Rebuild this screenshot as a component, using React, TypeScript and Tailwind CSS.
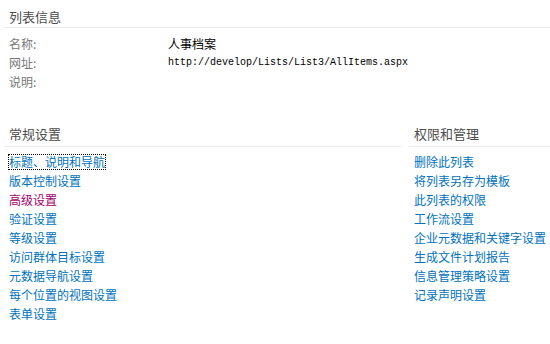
import React from "react";

const font = { fontFamily: '"Noto Sans CJK SC", "Noto Sans", sans-serif' };

const leftLinks = [
  "标题、说明和导航",
  "版本控制设置",
  "高级设置",
  "验证设置",
  "等级设置",
  "访问群体目标设置",
  "元数据导航设置",
  "每个位置的视图设置",
  "表单设置",
];

const rightLinks = [
  "删除此列表",
  "将列表另存为模板",
  "此列表的权限",
  "工作流设置",
  "企业元数据和关键字设置",
  "生成文件计划报告",
  "信息管理策略设置",
  "记录声明设置",
];

function LinkItem({ text, idx }: { text: string; idx: number }) {
  const color = idx === 2 ? "text-[#a3006b]" : "text-[#0072bc]";
  return (
    <div className="h-[19px] flex items-center">
      <a
        href="#"
        className={`${color} text-[12px] leading-[14px] no-underline ${
          idx === 0 ? "outline-1 outline-dotted outline-black" : ""
        }`}
      >
        {text}
      </a>
    </div>
  );
}

export default function App() {
  return (
    <div className="w-[550px] h-[344px] bg-white overflow-hidden" style={font}>
      <div className="ml-[3px]">
        <div className="pt-[7px] pb-[1px] border-b border-[#ebebeb]">
          <div className="h-[19px] flex items-center pl-[6px] text-[13px] text-[#4c4c4c]">列表信息</div>
        </div>
        <div className="pt-[6px] pl-[6px]">
          {[
            ["名称:", "人事档案", false],
            ["网址:", "http://develop/Lists/List3/AllItems.aspx", true],
            ["说明:", "", false],
          ].map(([label, value, mono], i) => (
            <div key={i} className="h-[19px] flex items-center">
              <div className="w-[159px] text-[12px] text-[#777777]">{label as string}</div>
              <div
                className={mono ? "text-[10px] text-black" : "text-[12px] text-black"}
                style={mono ? { fontFamily: '"Liberation Mono", monospace' } : undefined}
              >
                {value as string}
              </div>
            </div>
          ))}
        </div>
      </div>
      <div className="mt-[33px] flex">
        <div className="ml-[4px] w-[397px]">
          <div className="pb-[3px] border-b border-[#ebebeb]">
            <div className="h-[19px] flex items-center pl-[5px] text-[13px] text-[#4c4c4c]">常规设置</div>
          </div>
          <div className="pt-[5px] pl-[5px]">
            {leftLinks.map((t, i) => (
              <LinkItem key={t} text={t} idx={i} />
            ))}
          </div>
        </div>
        <div className="ml-[8px] flex-1">
          <div className="pb-[3px] border-b border-[#ebebeb]">
            <div className="h-[19px] flex items-center pl-[5px] text-[13px] text-[#4c4c4c]">权限和管理</div>
          </div>
          <div className="pt-[5px] pl-[5px]">
            {rightLinks.map((t, i) => (
              <LinkItem key={t} text={t} idx={i + 100} />
            ))}
          </div>
        </div>
      </div>
    </div>
  );
}
